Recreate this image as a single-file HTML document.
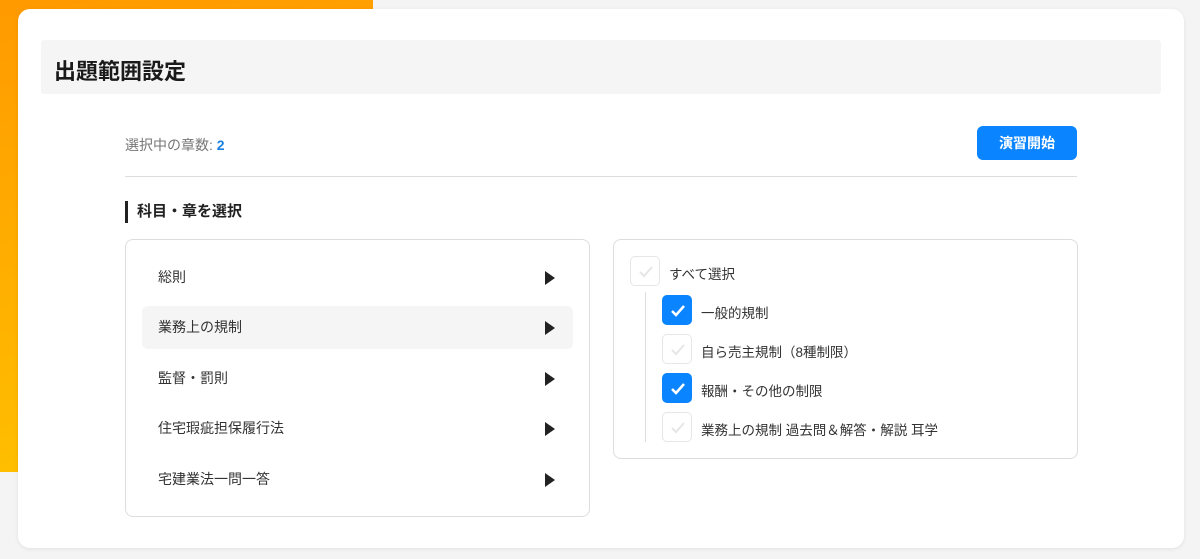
<!DOCTYPE html>
<html><head><meta charset="utf-8"><style>
*{box-sizing:border-box;margin:0;padding:0}
body{width:1200px;height:559px;background:#f4f4f4;position:relative;overflow:hidden;font-family:"Liberation Sans","Noto Sans CJK JP",sans-serif;color:#222}
.bg{position:absolute;left:0;top:0;width:373px;height:472px;background:linear-gradient(170deg,#ff9a00,#ffc300)}
.card{position:absolute;left:18px;top:9px;width:1166px;height:539px;background:#fff;border-radius:12px;box-shadow:0 1px 4px rgba(0,0,0,.08)}
.head{position:absolute;left:41px;top:40px;width:1120px;height:54px;background:#f5f5f5;border-radius:3px;font-size:22px;font-weight:bold;padding:14px 13px;color:#1a1a1a}
.cnt{position:absolute;left:125px;top:135px;font-size:14px;color:#777}
.cnt b{color:#1a7fe0}
.btn{position:absolute;left:977px;top:126px;width:100px;height:34px;background:#0a84ff;border-radius:6px;color:#fff;font-weight:bold;font-size:14px;text-align:center;line-height:34px}
.hr{position:absolute;left:125px;top:176px;width:952px;height:1px;background:#ddd}
.sec{position:absolute;left:125px;top:201px;height:22px;border-left:3px solid #222;padding-left:9px;font-size:15px;font-weight:bold;line-height:22px}
.lp{position:absolute;left:125px;top:239px;width:465px;height:278px;border:1px solid #ddd;border-radius:8px}
.it{position:absolute;left:16px;width:431px;height:43px;border-radius:6px;font-size:14px;padding-left:16px;line-height:43px;color:#333}
.it.on{background:#f5f5f5}
.it i{position:absolute;right:18px;top:15px;width:0;height:0;border-left:10px solid #222;border-top:7px solid transparent;border-bottom:7px solid transparent}
.rp{position:absolute;left:613px;top:239px;width:465px;height:220px;border:1px solid #ddd;border-radius:8px}
.cb{position:absolute;width:30px;height:30px;border:1px solid #e6e6e6;border-radius:5px;background:#fff}
.cb svg{position:absolute;left:7px;top:8px}
.cb.on{background:#0a84ff;border-color:#0a84ff}
.lb{position:absolute;font-size:13.5px;color:#333}
.vl{position:absolute;left:645px;top:292px;width:1px;height:150px;background:#ddd}
</style></head><body>
<div class="bg"></div>
<div class="card"></div>
<div class="head">出題範囲設定</div>
<div class="cnt">選択中の章数: <b>2</b></div>
<div class="btn">演習開始</div>
<div class="hr"></div>
<div class="sec">科目・章を選択</div>
<div class="lp">
<div class="it" style="top:16px">総則<i></i></div>
<div class="it on" style="top:66px">業務上の規制<i></i></div>
<div class="it" style="top:117px">監督・罰則<i></i></div>
<div class="it" style="top:167px">住宅瑕疵担保履行法<i></i></div>
<div class="it" style="top:218px">宅建業法一問一答<i></i></div>
</div>
<div class="rp"></div>
<div class="vl"></div>
<div class="cb" style="left:630px;top:256px"><svg width="16" height="14"><path d="M2 7l4 4 8-9" fill="none" stroke="#e6e6e6" stroke-width="2"/></svg></div>
<div class="lb" style="left:669px;top:263px">すべて選択</div>
<div class="cb on" style="left:662px;top:295px"><svg width="16" height="14"><path d="M2 7l4 4 8-9" fill="none" stroke="#fff" stroke-width="2.5"/></svg></div>
<div class="lb" style="left:701px;top:302px">一般的規制</div>
<div class="cb" style="left:662px;top:334px"><svg width="16" height="14"><path d="M2 7l4 4 8-9" fill="none" stroke="#e6e6e6" stroke-width="2"/></svg></div>
<div class="lb" style="left:701px;top:341px">自ら売主規制（8種制限）</div>
<div class="cb on" style="left:662px;top:373px"><svg width="16" height="14"><path d="M2 7l4 4 8-9" fill="none" stroke="#fff" stroke-width="2.5"/></svg></div>
<div class="lb" style="left:701px;top:380px">報酬・その他の制限</div>
<div class="cb" style="left:662px;top:412px"><svg width="16" height="14"><path d="M2 7l4 4 8-9" fill="none" stroke="#e6e6e6" stroke-width="2"/></svg></div>
<div class="lb" style="left:701px;top:419px">業務上の規制 過去問＆解答・解説 耳学</div>
</body></html>
